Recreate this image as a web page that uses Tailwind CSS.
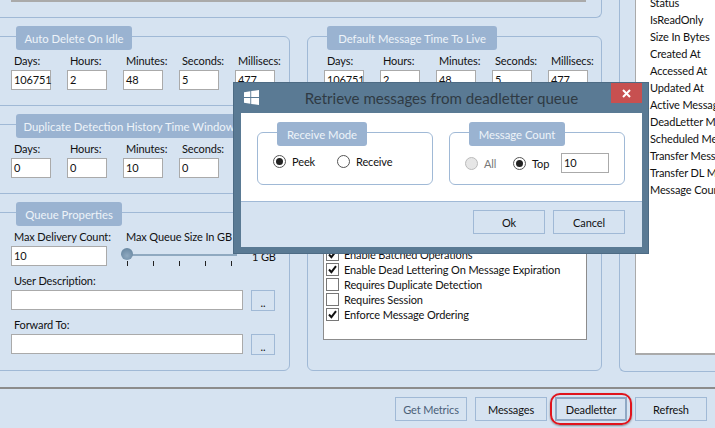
<!DOCTYPE html>
<html lang="en">
<head>
    <meta charset="UTF-8">
    <title>Retrieve messages from deadletter queue</title>
    <script src="https://cdn.jsdelivr.net/npm/@tailwindcss/browser@4"></script>
</head>
<body class="m-0">
    <div class="relative h-[428px] w-[715px] overflow-hidden bg-[#d6e3f1] font-['Lato',sans-serif] text-[11px] leading-[17px] tracking-[-0.12px] text-[#111]">

        <!-- main area -->
        <div class="flex h-[389px] border-b-2 border-[#8c8c8c]">
            <div class="-ml-2 w-[610px] shrink-0">
                <!-- bottom of the group above -->
                <div class="h-[18px] rounded-br-md border-r border-b border-[#a0b9d6]">
                    <div class="ml-[19px] mr-[15px] h-[2px] border-b-2 border-[#aaa] bg-white"></div>
                </div>

                <div class="flex gap-[17px]">
                    <!-- left column -->
                    <div class="w-[298px] shrink-0">
                        <div class="mt-[18px] h-[70px] rounded-md border border-[#a0b9d6]">
                            <div class="-mt-[11px] ml-[23px] flex h-6 w-[116px] items-center justify-center rounded-[3px] bg-[#9ab3d1] text-[11.3px] tracking-normal whitespace-nowrap text-[#eef3f9]">Auto Delete On Idle</div>
                            <div class="ml-[18px] mt-[2px] flex gap-4">
                                <div class="w-10"><div class="pb-px pl-[3px]">Days:</div><div class="h-5 border border-[#aaa] bg-white pl-[2px]">106751</div></div>
                                <div class="w-10"><div class="pb-px pl-[3px]">Hours:</div><div class="h-5 border border-[#aaa] bg-white pl-[2px]">2</div></div>
                                <div class="w-10"><div class="pb-px pl-[3px]">Minutes:</div><div class="h-5 border border-[#aaa] bg-white pl-[2px]">48</div></div>
                                <div class="w-10"><div class="whitespace-nowrap pb-px pl-[3px]">Seconds:</div><div class="h-5 border border-[#aaa] bg-white pl-[2px]">5</div></div>
                                <div class="w-10"><div class="whitespace-nowrap pb-px pl-[3px]">Millisecs:</div><div class="h-5 border border-[#aaa] bg-white pl-[2px]">477</div></div>
                            </div>
                        </div>

                        <div class="mt-[18px] h-[70px] rounded-md border border-[#a0b9d6]">
                            <div class="-mt-[11px] ml-[23px] flex h-6 w-[226px] items-center justify-center rounded-[3px] bg-[#9ab3d1] text-[11.3px] tracking-normal whitespace-nowrap text-[#eef3f9]">Duplicate Detection History Time Window</div>
                            <div class="ml-[18px] mt-[2px] flex gap-4">
                                <div class="w-10"><div class="pb-px pl-[3px]">Days:</div><div class="h-5 border border-[#aaa] bg-white pl-[2px]">0</div></div>
                                <div class="w-10"><div class="pb-px pl-[3px]">Hours:</div><div class="h-5 border border-[#aaa] bg-white pl-[2px]">0</div></div>
                                <div class="w-10"><div class="pb-px pl-[3px]">Minutes:</div><div class="h-5 border border-[#aaa] bg-white pl-[2px]">10</div></div>
                                <div class="w-10"><div class="whitespace-nowrap pb-px pl-[3px]">Seconds:</div><div class="h-5 border border-[#aaa] bg-white pl-[2px]">0</div></div>
                            </div>
                        </div>

                        <div class="mt-[18px] h-[159px] rounded-md border border-[#a0b9d6]">
                            <div class="-mt-[11px] ml-[23px] flex h-6 w-[106px] items-center justify-center rounded-[3px] bg-[#9ab3d1] text-[11.3px] tracking-normal whitespace-nowrap text-[#eef3f9]">Queue Properties</div>
                            <div class="ml-[18px] mt-[2px] flex">
                                <div class="w-24 shrink-0">
                                    <div class="whitespace-nowrap pb-px pl-[3px]">Max Delivery Count:</div>
                                    <div class="h-5 border border-[#aaa] bg-white pl-[2px]">10</div>
                                </div>
                                <div class="ml-[15px] w-[155px] shrink-0">
                                    <div class="whitespace-nowrap pb-px pl-1">Max Queue Size In GB</div>
                                    <div class="relative h-5 pl-[5px] pt-[8px]">
                                        <div class="absolute -left-px top-[2px] h-3 w-3 rounded-full bg-[radial-gradient(circle_at_50%_65%,#8fa9c0,#5f7f9a)]"></div>
                                        <div class="h-[2px] w-[110px] bg-[#8fa9c0]"></div>
                                        <div class="mt-[5px] flex w-[105px] justify-between">
                                            <div class="h-[5px] w-px bg-[#222]"></div>
                                            <div class="h-[5px] w-px bg-[#222]"></div>
                                            <div class="h-[5px] w-px bg-[#222]"></div>
                                            <div class="h-[5px] w-px bg-[#222]"></div>
                                            <div class="h-[5px] w-px bg-[#222]"></div>
                                        </div>
                                        <div class="absolute left-[130px] top-[2px] whitespace-nowrap">1 GB</div>
                                    </div>
                                </div>
                            </div>
                            <div class="ml-[18px] mt-[6px] pb-px pl-[3px]">User Description:</div>
                            <div class="ml-[18px] flex gap-2">
                                <div class="h-5 w-[232px] border border-[#aaa] bg-white"></div>
                                <div class="h-[21px] w-6 border border-[#a0b9d6] text-center leading-[24px]">..</div>
                            </div>
                            <div class="ml-[18px] mt-[5px] pb-px pl-[3px]">Forward To:</div>
                            <div class="ml-[18px] flex gap-2">
                                <div class="h-5 w-[232px] border border-[#aaa] bg-white"></div>
                                <div class="h-[21px] w-6 border border-[#a0b9d6] text-center leading-[24px]">..</div>
                            </div>
                        </div>
                    </div>

                    <!-- right column -->
                    <div class="w-[295px] shrink-0">
                        <div class="mt-[18px] h-[70px] rounded-md border border-[#a0b9d6]">
                            <div class="-mt-[11px] ml-[19px] flex h-6 w-[170px] items-center justify-center rounded-[3px] bg-[#9ab3d1] text-[11.3px] tracking-normal whitespace-nowrap text-[#eef3f9]">Default Message Time To Live</div>
                            <div class="ml-4 mt-[2px] flex gap-4">
                                <div class="w-10"><div class="pb-px pl-[3px]">Days:</div><div class="h-5 border border-[#aaa] bg-white pl-[2px]">106751</div></div>
                                <div class="w-10"><div class="pb-px pl-[3px]">Hours:</div><div class="h-5 border border-[#aaa] bg-white pl-[2px]">2</div></div>
                                <div class="w-10"><div class="pb-px pl-[3px]">Minutes:</div><div class="h-5 border border-[#aaa] bg-white pl-[2px]">48</div></div>
                                <div class="w-10"><div class="whitespace-nowrap pb-px pl-[3px]">Seconds:</div><div class="h-5 border border-[#aaa] bg-white pl-[2px]">5</div></div>
                                <div class="w-10"><div class="whitespace-nowrap pb-px pl-[3px]">Millisecs:</div><div class="h-5 border border-[#aaa] bg-white pl-[2px]">477</div></div>
                            </div>
                        </div>

                        <div class="mt-[106px] h-[159px] rounded-md border border-[#a0b9d6] pl-[15px] pt-[30px]">
                            <div class="h-[97px] w-[264px] border border-[#8c8c8c] bg-white pl-[2px] pt-[3px]">
                                <div class="flex h-[15px] items-center gap-[5px] whitespace-nowrap"><svg class="shrink-0 border border-[#777]" width="13" height="13" viewBox="0 0 11 11" fill="none" stroke="#111" stroke-width="2"><path d="M2 5.5l2.4 2.6L9 2.2"/></svg><div>Enable Batched Operations</div></div>
                                <div class="flex h-[15px] items-center gap-[5px] whitespace-nowrap"><svg class="shrink-0 border border-[#777]" width="13" height="13" viewBox="0 0 11 11" fill="none" stroke="#111" stroke-width="2"><path d="M2 5.5l2.4 2.6L9 2.2"/></svg><div>Enable Dead Lettering On Message Expiration</div></div>
                                <div class="flex h-[15px] items-center gap-[5px] whitespace-nowrap"><div class="h-[13px] w-[13px] shrink-0 border border-[#777]"></div><div>Requires Duplicate Detection</div></div>
                                <div class="flex h-[15px] items-center gap-[5px] whitespace-nowrap"><div class="h-[13px] w-[13px] shrink-0 border border-[#777]"></div><div>Requires Session</div></div>
                                <div class="flex h-[15px] items-center gap-[5px] whitespace-nowrap"><svg class="shrink-0 border border-[#777]" width="13" height="13" viewBox="0 0 11 11" fill="none" stroke="#111" stroke-width="2"><path d="M2 5.5l2.4 2.6L9 2.2"/></svg><div>Enforce Message Ordering</div></div>
                            </div>
                        </div>
                    </div>
                </div>
            </div>

            <!-- right panel, runs off the window -->
            <div class="ml-[17px] h-[372px] w-[200px] shrink-0 rounded-bl-md border-b border-l border-[#a0b9d6] pl-[15px]">
                <div class="h-[355px] overflow-hidden border-b-2 border-l border-[#aaa] bg-white pl-[14px] leading-[17px]">
                    <div class="-mt-[6px] whitespace-nowrap">
                        <div>Status</div>
                        <div>IsReadOnly</div>
                        <div>Size In Bytes</div>
                        <div>Created At</div>
                        <div>Accessed At</div>
                        <div>Updated At</div>
                        <div>Active Message Count</div>
                        <div>DeadLetter Message Count</div>
                        <div>Scheduled Message Count</div>
                        <div>Transfer Message Count</div>
                        <div>Transfer DL Message Count</div>
                        <div>Message Count</div>
                    </div>
                </div>
            </div>
        </div>

        <!-- bottom buttons -->
        <div class="flex justify-end gap-2 pr-2 pt-2">
            <div class="flex h-6 w-[72px] items-center justify-center border border-[#a0b9d6] text-[#4a6078]">Get Metrics</div>
            <div class="flex h-6 w-[72px] items-center justify-center border border-[#a0b9d6]">Messages</div>
            <div class="relative flex h-6 w-[72px] items-center justify-center border-2 border-[#8fa8c4]">
                Deadletter
                <div class="absolute -inset-x-[7px] -inset-y-[6px] rounded-[10px] border-2 border-[#e0141c] shadow-[0_1px_2px_rgba(0,0,0,0.4)]"></div>
            </div>
            <div class="flex h-6 w-[72px] items-center justify-center border border-[#a0b9d6]">Refresh</div>
        </div>

        <!-- modal dialog -->
        <div class="absolute left-[233px] top-[82px] h-[172px] w-[416px] border border-[#4d6b84] bg-[#5a7a94] pb-[7px] pl-[7px] pr-[6px]">
            <div class="relative flex h-[30px] items-center justify-center text-[15.1px] tracking-normal text-[#2f3a44]">
                <svg class="absolute left-[3px] top-[7px]" width="15" height="15" viewBox="0 0 15 15" fill="#fff">
                    <polygon points="0,2.2 6.3,1.2 6.3,7 0,7"/>
                    <polygon points="7.2,1 15,0 15,7 7.2,7"/>
                    <polygon points="0,8 6.3,8 6.3,13.8 0,12.8"/>
                    <polygon points="7.2,8 15,8 15,15 7.2,14"/>
                </svg>
                Retrieve messages from deadletter queue
                <div class="absolute right-0 top-0 flex h-[20px] w-[31px] items-center justify-center bg-[#c75050]">
                    <svg width="9" height="9" viewBox="0 0 9 9" stroke="#fff" stroke-width="2"><path d="M1 1l7 7M8 1l-7 7"/></svg>
                </div>
            </div>
            <div class="bg-white">
                <div class="flex h-[88px] gap-4 pl-4 pt-[19px]">
                    <div class="h-[53px] w-[176px] rounded-md border border-[#a0b9d6]">
                        <div class="-mt-[11px] ml-[19px] flex h-6 w-[90px] items-center justify-center rounded-[3px] bg-[#9ab3d1] text-[11.3px] tracking-normal whitespace-nowrap text-[#eef3f9]">Receive Mode</div>
                        <div class="ml-[15px] mt-[7px] flex items-center">
                            <div class="flex h-[13px] w-[13px] items-center justify-center rounded-full border border-[#555]"><div class="h-[7px] w-[7px] rounded-full bg-[#222]"></div></div>
                            <div class="ml-[6px] w-[45px]">Peek</div>
                            <div class="h-[13px] w-[13px] rounded-full border border-[#555] bg-white"></div>
                            <div class="ml-[6px]">Receive</div>
                        </div>
                    </div>
                    <div class="h-[53px] w-[176px] rounded-md border border-[#a0b9d6]">
                        <div class="-mt-[11px] ml-[19px] flex h-6 w-[96px] items-center justify-center rounded-[3px] bg-[#9ab3d1] text-[11.3px] tracking-normal whitespace-nowrap text-[#eef3f9]">Message Count</div>
                        <div class="ml-[15px] mt-[7px] flex items-center">
                            <div class="h-[13px] w-[13px] rounded-full border border-[#bbb] bg-[#e6e6e6]"></div>
                            <div class="ml-[6px] w-[29px] text-[#777]">All</div>
                            <div class="flex h-[13px] w-[13px] items-center justify-center rounded-full border border-[#555]"><div class="h-[7px] w-[7px] rounded-full bg-[#222]"></div></div>
                            <div class="ml-[6px] w-[29px]">Top</div>
                            <div class="h-5 w-12 border border-[#aaa] bg-white pl-[2px]">10</div>
                        </div>
                    </div>
                </div>
                <div class="flex h-[46px] justify-end gap-2 border-t border-[#a0b9d6] bg-[#d6e3f1] pr-[17px] pt-[8px]">
                    <div class="flex h-6 w-[72px] items-center justify-center border border-[#a0b9d6]">Ok</div>
                    <div class="flex h-6 w-[72px] items-center justify-center border border-[#a0b9d6]">Cancel</div>
                </div>
            </div>
        </div>
    </div>
</body>
</html>
